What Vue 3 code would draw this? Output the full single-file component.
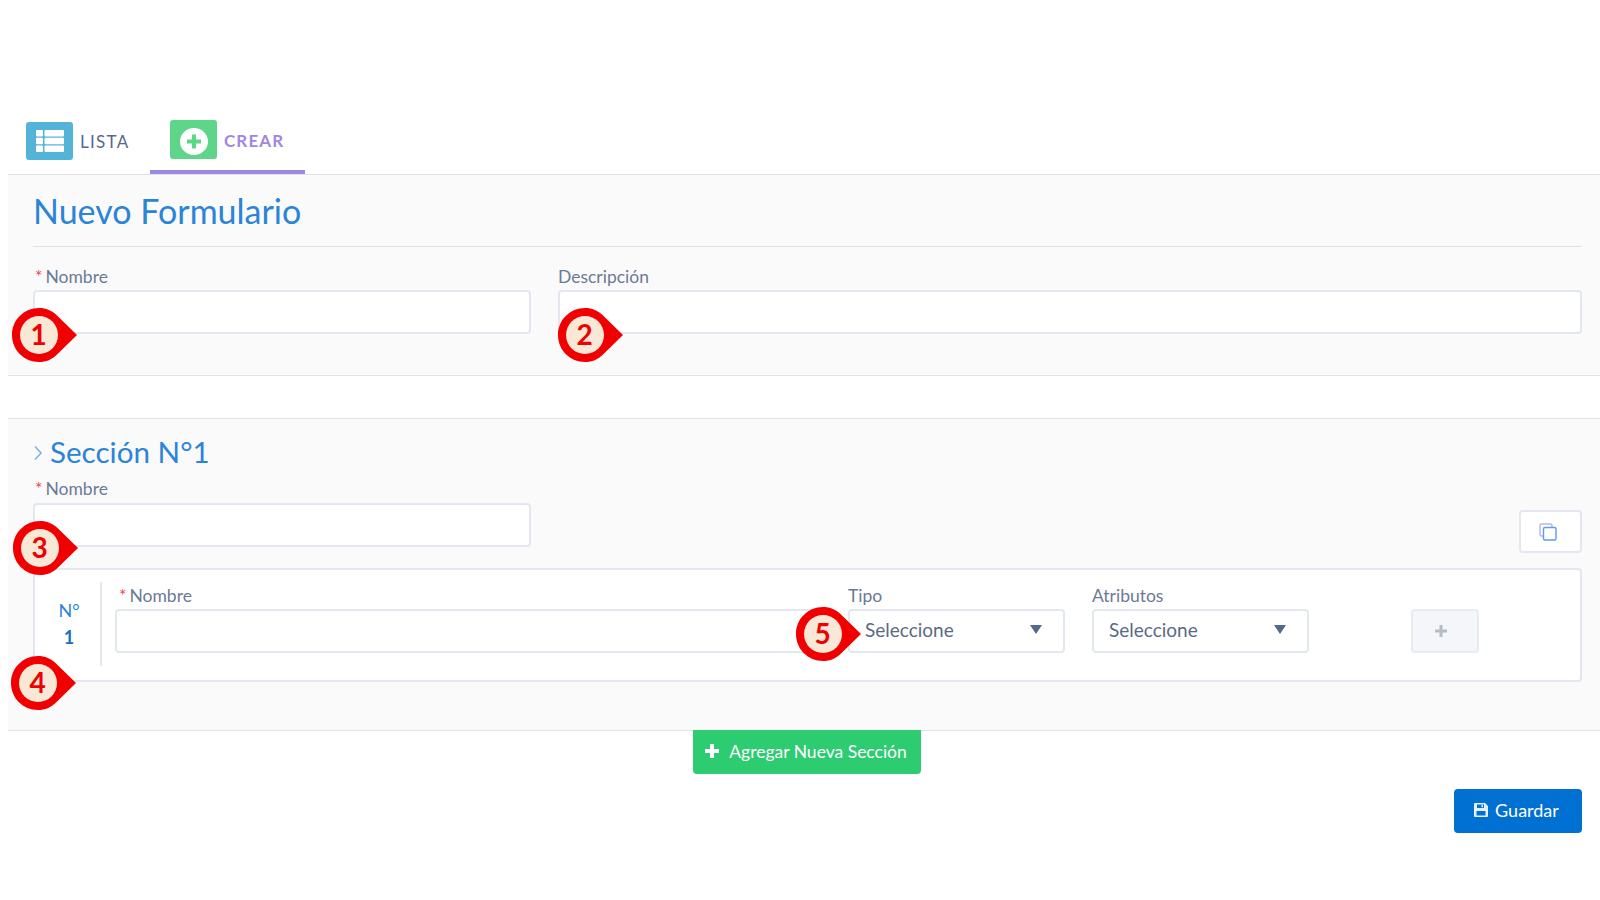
<script setup>
const markers = [
  { n: 1, x: 12, y: 308 },
  { n: 2, x: 558, y: 308 },
  { n: 3, x: 13, y: 521 },
  { n: 4, x: 11, y: 656 },
  { n: 5, x: 796, y: 607 }
]
</script>

<template>
  <div class="page">
    <nav class="tabs">
      <div class="tab">
        <span class="tab-icon list">
          <svg width="28" height="22" viewBox="0 0 28 22"><g fill="#fff"><rect x="0" y="0" width="7" height="6.400" rx="1"/><rect x="8.500" y="0" width="19.500" height="6.400" rx="1"/><rect x="0" y="7.800" width="7" height="6.400" rx="1"/><rect x="8.500" y="7.800" width="19.500" height="6.400" rx="1"/><rect x="0" y="15.600" width="7" height="6.400" rx="1"/><rect x="8.500" y="15.600" width="19.500" height="6.400" rx="1"/></g></svg>
        </span>
        <span class="tab-label">LISTA</span>
      </div>
      <div class="tab active">
        <span class="tab-icon add">
          <svg class="add-glyph" width="28" height="27" viewBox="0 0 28 27"><ellipse cx="14" cy="13.500" rx="14" ry="13.500" fill="#fff"/><path fill="#5fd58a" d="M12 6.500h4v5h5v4h-5v5h-4v-5H7v-4h5z"/></svg>
        </span>
        <span class="tab-label">CREAR</span>
      </div>
    </nav>

    <section class="panel form-panel">
      <h1 class="title">Nuevo Formulario</h1>
      <div class="fields">
        <div class="field first">
          <label class="label req"><i>*</i>Nombre</label>
          <div class="input"></div>
        </div>
        <div class="field grow">
          <label class="label">Descripción</label>
          <div class="input"></div>
        </div>
      </div>
    </section>

    <section class="panel section-panel">
      <h2 class="section-title">
        <svg class="chevron" width="10" height="16" viewBox="0 0 10 16"><path fill="none" stroke="#7db5ea" stroke-width="1.600" d="M2 1.500 8 8l-6 6.500"/></svg>
        Sección N°1
      </h2>
      <div class="section-head">
        <div class="field first">
          <label class="label req"><i>*</i>Nombre</label>
          <div class="input"></div>
        </div>
        <button class="copy">
          <svg width="18" height="18" viewBox="0 0 18 18" fill="none" stroke-width="1.400"><rect x="1" y="1" width="12" height="12" rx="1.500" stroke="#b4b6e8"/><rect x="4.500" y="4.500" width="12.500" height="12.500" rx="1.500" stroke="#5c9cf0" fill="#fff"/></svg>
        </button>
      </div>
      <div class="row-card">
        <div class="num"><span>N°</span><b>1</b></div>
        <div class="row-fields">
          <div class="field name">
            <label class="label req"><i>*</i>Nombre</label>
            <div class="input"></div>
          </div>
          <div class="field sel">
            <label class="label">Tipo</label>
            <div class="input select">Seleccione<span class="caret"></span></div>
          </div>
          <div class="field sel">
            <label class="label">Atributos</label>
            <div class="input select">Seleccione<span class="caret"></span></div>
          </div>
          <button class="plus">
            <svg width="14" height="14" viewBox="0 0 14 14"><path fill="#b4bcc6" d="M5.500 1h3v4.500H13v3H8.500V13h-3V8.500H1v-3h4.500z"/></svg>
          </button>
        </div>
      </div>
    </section>

    <div class="add-wrap">
      <button class="btn green">
        <svg width="14" height="14" viewBox="0 0 14 14"><path fill="#fff" d="M5 0h4v5h5v4H9v5H5V9H0V5h5z"/></svg>
        Agregar Nueva Sección
      </button>
    </div>
    <div class="save-wrap">
      <button class="btn blue">
        <svg width="16" height="16" viewBox="0 0 16 16"><path fill="#e6f0fb" fill-rule="evenodd" d="M2 1h10l3 3v10a1 1 0 0 1-1 1H2a1 1 0 0 1-1-1V2a1 1 0 0 1 1-1Zm2 1.500V6h7V2.500H4Zm4.500.6h1.500v2.200H8.500ZM3.500 9v4.500h9V9h-9Z"/></svg>
        Guardar
      </button>
    </div>

    <div v-for="m in markers" :key="m.n" class="marker" :style="{ left: m.x + 'px', top: m.y + 'px' }">
      <svg width="66" height="54" viewBox="0 0 66 54"><path fill="#f00000" d="M27 0c7 0 13 2.500 18 7.500L65 27 45 46.500C40 51.500 34 54 27 54 12 54 0 42 0 27S12 0 27 0Z"/><circle cx="27" cy="27" r="19" fill="#f9e8d6"/></svg>
      <span>{{ m.n }}</span>
    </div>
  </div>
</template>

<style>
html, body { margin: 0; background: #fff; }
</style>

<style scoped>
.page {
  position: relative;
  width: 1600px;
  height: 900px;
  overflow: hidden;
  background: #fff;
  font-family: Lato, "Open Sans", sans-serif;
  color: #54698d;
}
.tabs {
  display: flex;
  height: 54px;
  margin: 120px 0 0 8px;
  border-bottom: 1px solid #dfe3ee;
}
.tab {
  display: flex;
  align-items: flex-start;
  width: 142px;
  padding: 2px 0 0 18px;
  box-sizing: border-box;
  gap: 7px;
}
.tab.active {
  width: 155px;
  height: 54px;
  padding: 0 0 0 20px;
  border-bottom: 4px solid #9f88e0;
  color: #9f88e0;
}
.tab-icon {
  width: 47px;
  height: 38px;
  border-radius: 3px;
  display: flex;
  align-items: center;
  justify-content: center;
}
.tab-icon.list { background: #54b4d8; }
.tab-icon.add { background: #5fd58a; height: 39px; }
.add-glyph { margin-top: 3px; }
.tab-label { font-size: 17px; line-height: 40px; letter-spacing: 1.3px; }
.active .tab-label { font-weight: 700; letter-spacing: 1.1px; line-height: 41px; }
.panel {
  margin-left: 8px;
  background: #fafafb;
  padding: 0 18px 0 25px;
  box-sizing: border-box;
  border-bottom: 1px solid #dfe3ee;
}
.form-panel { height: 201px; }
.title {
  margin: 0;
  height: 72px;
  box-sizing: border-box;
  border-bottom: 1px solid #dde2ea;
  font-size: 34px;
  font-weight: 400;
  line-height: 71px;
  color: #2a84d8;
}
.fields { display: flex; gap: 27px; margin-top: 19px; }
.field.first { width: 498px; flex: none; }
.field.grow { flex: 1; }
.label {
  display: block;
  height: 24px;
  font-size: 17.500px;
  line-height: 22px;
  color: #6b7a96;
}
.section-head .label { height: 25px; }
.label.req { padding-left: 2px; }
.name .label.req { padding-left: 4px; }
.label i {
  color: #f0454a;
  font-style: normal;
  margin-right: 3px;
}
.input {
  height: 44px;
  box-sizing: border-box;
  border: 2px solid #e3e7ef;
  border-radius: 4px;
  background: #fff;
}
.section-panel {
  height: 313px;
  margin-top: 42px;
  border-top: 1px solid #dfe3ee;
}
.section-title {
  margin: 0;
  height: 59px;
  display: flex;
  align-items: center;
  gap: 7px;
  padding-top: 6px;
  box-sizing: border-box;
  font-size: 29.600px;
  font-weight: 400;
  color: #2a84d8;
}
.chevron { margin-top: 2px; }
.section-head { display: flex; justify-content: space-between; align-items: flex-end; }
.copy {
  width: 63px;
  height: 43px;
  background: #fff;
  border: 2px solid #e3e7ef;
  border-radius: 4px;
  display: flex;
  align-items: center;
  justify-content: center;
  padding: 0 6px 0 0;
  margin-bottom: -6px;
}
.row-card {
  display: flex;
  height: 114px;
  margin-top: 21px;
  box-sizing: border-box;
  background: #fff;
  border: 2px solid #e3e7ef;
  border-radius: 4px;
  padding: 12px 0;
}
.num {
  width: 67px;
  height: 84px;
  flex: none;
  border-right: 2px solid #e3e7ef;
  box-sizing: border-box;
  display: flex;
  flex-direction: column;
  align-items: center;
  padding: 18px 0 0 3px;
  gap: 7px;
  color: #2a84d8;
  font-size: 18px;
  line-height: 20px;
}
.num b { color: #1a70c0; }
.row-fields {
  display: flex;
  gap: 27px;
  padding: 3px 0 0 13px;
  align-items: flex-start;
}
.field.name { width: 706px; }
.field.sel { width: 217px; }
.input.select {
  display: flex;
  align-items: center;
  justify-content: space-between;
  padding: 0 21px 3px 15px;
  font-size: 19px;
  color: #5a6a85;
}
.caret {
  width: 0;
  height: 0;
  border-left: 6px solid transparent;
  border-right: 6px solid transparent;
  border-top: 9px solid #54698d;
}
.plus {
  width: 68px;
  height: 44px;
  margin: 24px 0 0 75px;
  background: #f4f6f9;
  border: 2px solid #e8ebf1;
  border-radius: 4px;
  display: flex;
  align-items: center;
  justify-content: center;
  padding: 0 8px 0 0;
}
.btn {
  border: 0;
  border-radius: 4px;
  color: #fff;
  font-family: inherit;
  display: flex;
  align-items: center;
  justify-content: center;
  gap: 10px;
  padding: 0 0 2px;
}
.add-wrap { display: flex; margin-left: 693px; margin-top: -1px; }
.green { width: 228px; height: 44px; background: #2ecc71; border-radius: 0 0 4px 4px; font-size: 17.500px; padding-right: 2px; }
.save-wrap { display: flex; justify-content: flex-end; padding-right: 18px; margin-top: 15px; }
.blue { width: 128px; height: 44px; background: #0070d2; gap: 6px; font-size: 18px; padding-right: 4px; }
.marker {
  position: absolute;
  width: 66px;
  height: 54px;
}
.marker svg { display: block; }
.marker span {
  position: absolute;
  left: 0;
  top: -1px;
  width: 53px;
  height: 54px;
  display: flex;
  align-items: center;
  justify-content: center;
  font-size: 28px;
  font-weight: 700;
  color: #f00000;
  font-family: Lato, sans-serif;
}
</style>
